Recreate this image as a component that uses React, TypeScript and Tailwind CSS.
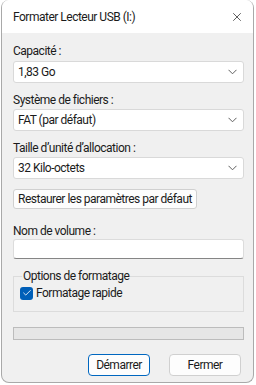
import { Check, X } from 'lucide-react'

const font = { fontFamily: 'Roboto, "Liberation Sans", sans-serif' }

function Chevron() {
  return (
    <svg width="9" height="6" viewBox="0 0 9 6" className="shrink-0">
      <path d="M0.5 0.8 L4.5 4.8 L8.5 0.8" fill="none" stroke="#5f5f5f" strokeWidth="1" />
    </svg>
  )
}

function Select({ value }: { value: string }) {
  return (
    <div className="flex h-[22px] items-center justify-between rounded-[3px] border border-[#d9d9d9] bg-white pl-[4px] pr-[6px]">
      <span>{value}</span>
      <Chevron />
    </div>
  )
}

export default function App() {
  return (
    <div className="h-[385px] w-[256px] bg-white text-[12px] leading-[16px] tracking-[-0.5px] text-[#1b1b1b]" style={font}>
      <div className="ml-[1px] flex h-[383px] w-[253px] flex-col overflow-hidden rounded-b-[8px] rounded-t-[8px] border border-t-0 border-[#a9a9a9] bg-[#f0f0f0]">
        <div className="flex h-[33px] shrink-0 items-center justify-between bg-white pl-[11px] pr-[9px]">
          <span>Formater Lecteur USB (I:)</span>
          <X size={14} strokeWidth={1.2} color="#1b1b1b" />
        </div>

        <div className="flex flex-col px-[11px] pr-[9px]">
          <div className="mt-[10px] h-[18px]">Capacité :</div>
          <Select value="1,83 Go" />

          <div className="mt-[9px] h-[17px]">Système de fichiers :</div>
          <Select value="FAT (par défaut)" />

          <div className="mt-[9px] h-[17px]">Taille d’unité d’allocation :</div>
          <Select value="32 Kilo-octets" />

          <div className="mt-[10px] flex">
            <button className="h-[20px] rounded-[3px] border border-[#d0d0d0] bg-[#fdfdfd] px-[4px] leading-[16px]">
              Restaurer les paramètres par défaut
            </button>
          </div>

          <div className="mt-[14px] h-[16px]">Nom de volume :</div>
          <div className="h-[20px] rounded-[3px] border border-[#dcdcdc] border-b-[#858585] bg-white" />

          <div className="relative mt-[17px] h-[36px] border border-[#dcdcdc]">
            <span className="absolute -top-[9px] left-[8px] bg-[#f0f0f0] px-[1px]">Options de formatage</span>
            <div className="mt-[8px] ml-[6px] flex items-center gap-[3px]">
              <span className="flex h-[13px] w-[13px] items-center justify-center rounded-[3px] bg-[#005fb8]">
                <Check size={10} strokeWidth={2} color="white" />
              </span>
              <span>Formatage rapide</span>
            </div>
          </div>

          <div className="mt-[15px] h-[13px] border border-[#bcbcbc] bg-[#e6e6e6]" />

          <div className="mt-[14px] flex justify-end gap-[19px] pr-[3px]">
            <button className="h-[22px] w-[62px] rounded-[4px] border border-[#0067c0] bg-[#fdfdfd]">
              Démarrer
            </button>
            <button className="h-[22px] w-[72px] rounded-[4px] border border-[#d0d0d0] bg-[#fdfdfd]">
              Fermer
            </button>
          </div>
        </div>
      </div>
    </div>
  )
}
